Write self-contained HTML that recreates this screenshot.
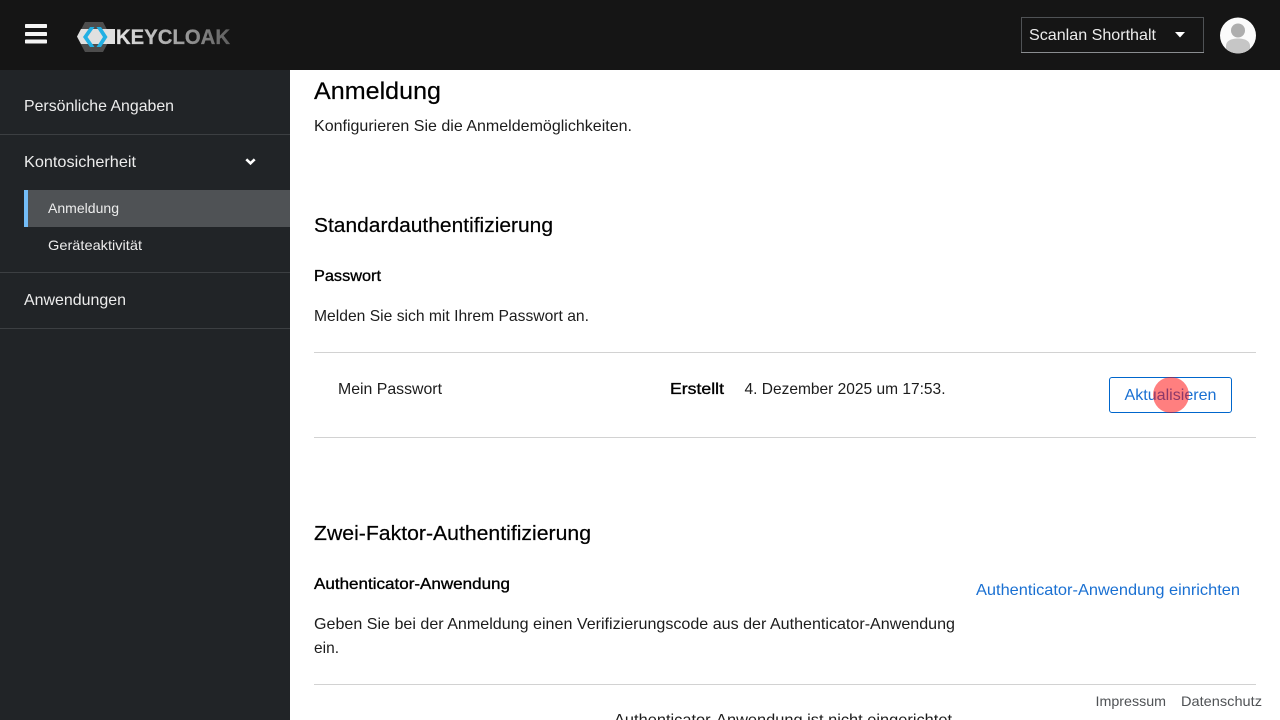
<!DOCTYPE html>
<html lang="de"><head><meta charset="utf-8"><title>Anmeldung</title>
<style>
html,body{margin:0;padding:0;width:1280px;height:720px;overflow:hidden;background:#fff}
svg{display:block;position:absolute;left:0;top:0}
text{font-family:"Liberation Sans",sans-serif;font-size:16px;fill:#1c1c1c}
.s{fill:#ececec}.w{fill:#000;stroke:#000;stroke-width:.2px}.m{fill:#000;stroke:#000;stroke-width:.35px}.l{fill:#1a70d2}
</style></head><body>
<svg width="1280" height="720" viewBox="0 0 1280 720">
<defs>
<linearGradient id="g" gradientUnits="userSpaceOnUse" x1="116" x2="230" y1="0" y2="0"><stop offset="0" stop-color="#e4e4e4"/><stop offset=".5" stop-color="#a8a8a8"/><stop offset="1" stop-color="#5e5e5e"/></linearGradient>
<clipPath id="av"><circle cx="1238" cy="35.500" r="18"/></clipPath>
</defs>
<rect width="1280" height="720" fill="#fff"/>
<rect width="1280" height="70" fill="#151515"/>
<rect y="70" width="290" height="650" fill="#212427"/>
<!-- hamburger -->
<rect x="25" y="24" width="22" height="4" rx=".8" fill="#f5f5f5"/>
<rect x="25" y="32" width="22" height="4" rx=".8" fill="#f5f5f5"/>
<rect x="25" y="39.500" width="22" height="4" rx=".8" fill="#f5f5f5"/>
<!-- logo -->
<path d="M85 22H103L111 37L103 52H85L77 37Z" fill="#4d4d4d"/>
<path d="M81 29H115V44H81L77 36.500Z" fill="#e0e0e0"/>
<path d="M90 27H94.500L87.500 37L94.500 47H90L83 37Z" fill="#22b0e4"/>
<path d="M96.500 27H101L107.500 37L101 47H96.500L103 37Z" fill="#22b0e4"/>
<text x="116" y="44" font-weight="700" style="font-size:21px;fill:url(#g);stroke:url(#g);stroke-width:.3px" textLength="114" lengthAdjust="spacingAndGlyphs">KEYCLOAK</text>
<!-- user dropdown -->
<rect x="1021.500" y="17.500" width="182" height="35" fill="#151515" stroke="#4f5255"/>
<path d="M1021 52.500H1204" stroke="#8a8d90"/>
<text x="1029" y="40" class="s" textLength="127" lengthAdjust="spacingAndGlyphs">Scanlan Shorthalt</text>
<path d="M1175 32H1185L1180 37.500Z" fill="#fff"/>
<!-- avatar -->
<circle cx="1238" cy="35.500" r="18" fill="#fbfbfb"/>
<g clip-path="url(#av)">
<circle cx="1238" cy="30.500" r="7" fill="#aeaeae"/>
<path d="M1226 56V46C1226 41 1231 38.500 1238 38.500C1245 38.500 1250 41 1250 46V56Z" fill="#c6c6c6"/>
</g>
<!-- sidebar -->
<text x="24" y="111" class="s" textLength="150" lengthAdjust="spacingAndGlyphs">Persönliche Angaben</text>
<rect y="134" width="290" height="1" fill="#3c3f42"/>
<text x="24" y="167" class="s" textLength="112" lengthAdjust="spacingAndGlyphs">Kontosicherheit</text>
<path d="M246.300 159.300L250.500 163.300L254.700 159.300" fill="none" stroke="#fff" stroke-width="2.600"/>
<rect x="24" y="190" width="266" height="37" fill="#4f5255"/>
<rect x="24" y="190" width="4" height="37" fill="#73bcf7"/>
<text x="48" y="213" class="s" style="font-size:14px" textLength="71" lengthAdjust="spacingAndGlyphs">Anmeldung</text>
<text x="48" y="250" class="s" style="font-size:14px" textLength="94" lengthAdjust="spacingAndGlyphs">Geräteaktivität</text>
<rect y="272" width="290" height="1" fill="#3c3f42"/>
<text x="24" y="305" class="s" textLength="102" lengthAdjust="spacingAndGlyphs">Anwendungen</text>
<rect y="328" width="290" height="1" fill="#3c3f42"/>
<!-- content -->
<text x="314" y="99" class="w" style="font-size:24px" textLength="127" lengthAdjust="spacingAndGlyphs">Anmeldung</text>
<text x="314" y="131" textLength="318" lengthAdjust="spacingAndGlyphs">Konfigurieren Sie die Anmeldemöglichkeiten.</text>
<text x="314" y="232" class="w" style="font-size:20px" textLength="239" lengthAdjust="spacingAndGlyphs">Standardauthentifizierung</text>
<text x="314" y="281" class="m" textLength="67" lengthAdjust="spacingAndGlyphs">Passwort</text>
<text x="314" y="321" textLength="275" lengthAdjust="spacingAndGlyphs">Melden Sie sich mit Ihrem Passwort an.</text>
<rect x="314" y="352" width="942" height="1" fill="#d2d2d2"/>
<text x="338" y="394" textLength="104" lengthAdjust="spacingAndGlyphs">Mein Passwort</text>
<text x="670" y="394" class="m" textLength="54" lengthAdjust="spacingAndGlyphs">Erstellt</text>
<text x="744.500" y="394" textLength="201" lengthAdjust="spacingAndGlyphs">4. Dezember 2025 um 17:53.</text>
<rect x="1109.500" y="377.500" width="122" height="35" rx="2.500" fill="#fff" stroke="#06c"/>
<text x="1124.500" y="400" class="l" textLength="92" lengthAdjust="spacingAndGlyphs">Aktualisieren</text>
<circle cx="1171" cy="395" r="18" fill="#ff0000" fill-opacity=".5"/>
<rect x="314" y="437" width="942" height="1" fill="#d2d2d2"/>
<text x="314" y="540" class="w" style="font-size:20px" textLength="277" lengthAdjust="spacingAndGlyphs">Zwei-Faktor-Authentifizierung</text>
<text x="314" y="589" class="m" textLength="196" lengthAdjust="spacingAndGlyphs">Authenticator-Anwendung</text>
<text x="976" y="595" class="l" textLength="264" lengthAdjust="spacingAndGlyphs">Authenticator-Anwendung einrichten</text>
<text x="314" y="629" textLength="641" lengthAdjust="spacingAndGlyphs">Geben Sie bei der Anmeldung einen Verifizierungscode aus der Authenticator-Anwendung</text>
<text x="314" y="653" textLength="25" lengthAdjust="spacingAndGlyphs">ein.</text>
<rect x="314" y="684" width="942" height="1" fill="#d2d2d2"/>
<text x="614" y="725" textLength="338" lengthAdjust="spacingAndGlyphs">Authenticator-Anwendung ist nicht eingerichtet</text>
<text x="1095.500" y="706" style="font-size:14px;fill:#4f5255" textLength="70.500" lengthAdjust="spacingAndGlyphs">Impressum</text>
<text x="1181" y="706" style="font-size:14px;fill:#4f5255" textLength="81" lengthAdjust="spacingAndGlyphs">Datenschutz</text>
</svg>
</body></html>
